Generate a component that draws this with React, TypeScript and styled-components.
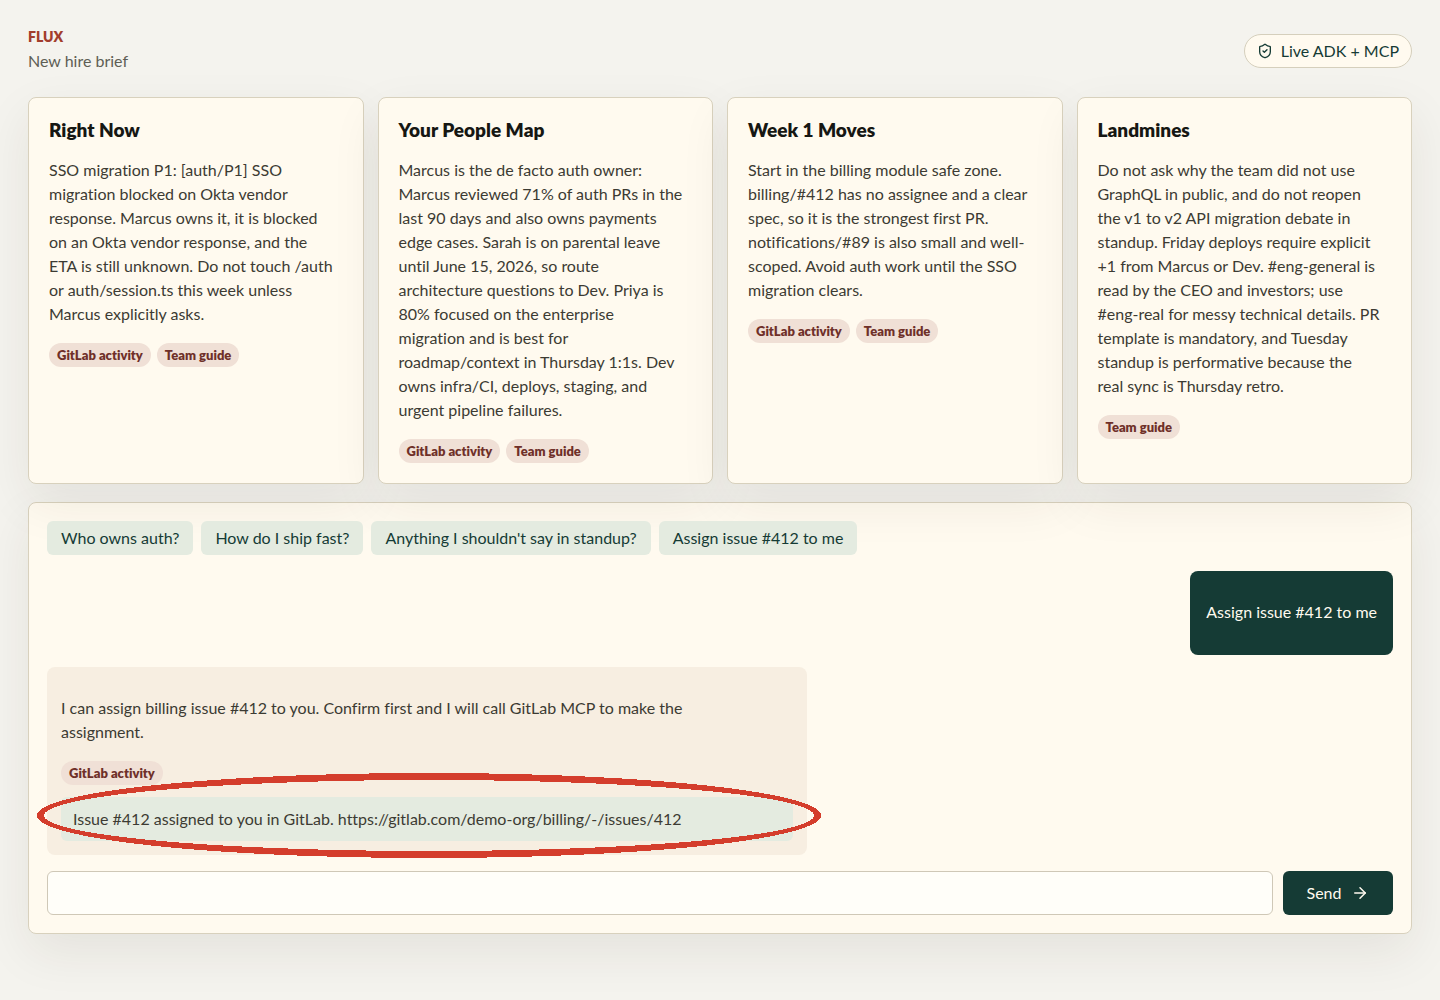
import React from "react";
import styled, { createGlobalStyle } from "styled-components";
import { ArrowRight, ShieldCheck } from "lucide-react";

const GlobalStyle = createGlobalStyle`
  * { box-sizing: border-box; }
  body {
    margin: 0;
    background: #f4f3ee;
    color: #161713;
    font-family: "Avenir Next", Avenir, Lato, sans-serif;
    font-size: 16px;
    line-height: 24px;
    font-variant-ligatures: none;
  }
  button, input { font: inherit; font-variant-ligatures: none; }
`;

const Page = styled.main`
  min-height: 100vh;
  padding: 28px;
`;

const Header = styled.header`
  display: flex;
  align-items: center;
  justify-content: space-between;
  margin-bottom: 24px;
`;

const Brand = styled.h1`
  margin: 0 0 3px;
  color: #a23d2c;
  font-size: 14px;
  line-height: 18px;
  font-weight: 800;
`;

const Tagline = styled.p`
  margin: 0;
  color: #5e5e55;
`;

const Status = styled.div`
  display: flex;
  align-items: center;
  gap: 8px;
  height: 34px;
  padding: 0 12px;
  border: 1px solid #d5cfbc;
  border-radius: 999px;
  background: #fffaef;
  color: #153b35;
`;

const surface = `
  border: 1px solid #d8d1bd;
  border-radius: 8px;
  background: #fffaef;
  box-shadow: 0 18px 50px rgba(54, 42, 24, 0.08);
`;

const Cards = styled.section`
  display: grid;
  grid-template-columns: repeat(4, minmax(0, 1fr));
  gap: 14px;
  margin-bottom: 18px;
`;

const Card = styled.article`
  ${surface}
  padding: 20px;
`;

const CardTitle = styled.h2`
  margin: 0 0 16px;
  font-size: 19px;
  line-height: 24px;
  font-weight: 800;
`;

const Copy = styled.p`
  margin: 0 0 17px;
  padding-right: 6px;
  color: #3c3b33;
`;

const Sources = styled.div`
  display: flex;
  flex-wrap: wrap;
  gap: 6px;
`;

const Source = styled.span`
  height: 24px;
  padding: 0 8px;
  border-radius: 999px;
  background: #f0e0d6;
  color: #6f3029;
  font-size: 13px;
  font-weight: 800;
`;

const Chat = styled.section`
  ${surface}
  display: grid;
  gap: 16px;
  padding: 18px;
`;

const Prompts = styled.div`
  display: flex;
  flex-wrap: wrap;
  gap: 8px;
`;

const Prompt = styled.button`
  height: 34px;
  padding: 0 14px;
  border: 0;
  border-radius: 6px;
  background: #e4ebe0;
  color: #153b35;
`;

const Messages = styled.div`
  display: flex;
  flex-direction: column;
  gap: 12px;
`;

const Bubble = styled.div<{ $own?: boolean }>`
  position: relative;
  align-self: ${(p) => (p.$own ? "flex-end" : "flex-start")};
  width: ${(p) => (p.$own ? "auto" : "100%")};
  max-width: 760px;
  padding: ${(p) => (p.$own ? "14px 16px" : "14px")};
  border-radius: 8px;
  background: ${(p) => (p.$own ? "#153b35" : "#f7eee1")};
`;

const BubbleText = styled.p<{ $own?: boolean }>`
  max-width: 700px;
  margin: 15px 0 17px;
  color: ${(p) => (p.$own ? "#fffaef" : "#3c3b33")};
`;

const Result = styled.div`
  margin-top: 12px;
  padding: 10px 12px;
  border-radius: 6px;
  background: #e4ebe0;
  color: #3c3b33;
`;

const Highlight = styled.svg`
  position: absolute;
  left: -10px;
  bottom: -3px;
  width: 784px;
  height: 85px;
  pointer-events: none;
`;

const Composer = styled.form`
  display: grid;
  grid-template-columns: minmax(0, 1fr) 110px;
  gap: 10px;
`;

const MessageInput = styled.input`
  height: 44px;
  padding: 0 14px;
  border: 1px solid #cfc8b7;
  border-radius: 6px;
  background: #fffef9;
`;

const Send = styled.button`
  display: flex;
  align-items: center;
  justify-content: center;
  gap: 10px;
  height: 44px;
  border: 0;
  border-radius: 6px;
  background: #153b35;
  color: #fffaef;
`;

const cards = [
  {
    title: "Right Now",
    text: "SSO migration P1: [auth/P1] SSO migration blocked on Okta vendor response. Marcus owns it, it is blocked on an Okta vendor response, and the ETA is still unknown. Do not touch /auth or auth/session.ts this week unless Marcus explicitly asks.",
    sources: ["GitLab activity", "Team guide"],
  },
  {
    title: "Your People Map",
    text: "Marcus is the de facto auth owner: Marcus reviewed 71% of auth PRs in the last 90 days and also owns payments edge cases. Sarah is on parental leave until June 15, 2026, so route architecture questions to Dev. Priya is 80% focused on the enterprise migration\u00a0and is best for roadmap/context in Thursday 1:1s. Dev owns infra/CI, deploys, staging, and urgent pipeline failures.",
    sources: ["GitLab activity", "Team guide"],
  },
  {
    title: "Week 1 Moves",
    text: "Start in the billing module safe zone. billing/#412 has no assignee and a clear spec, so it is the strongest first PR. notifications/#89 is also small and well-scoped. Avoid auth work until the SSO migration clears.",
    sources: ["GitLab activity", "Team guide"],
  },
  {
    title: "Landmines",
    text: "Do not ask why the team did not use GraphQL in public, and do not reopen the v1 to v2 API migration debate in standup. Friday deploys require explicit +1 from Marcus or Dev. #eng-general is read by the CEO and investors; use #eng-real for messy technical details. PR template is mandatory, and Tuesday standup is performative because the real\u00a0sync is Thursday retro.",
    sources: ["Team guide"],
  },
];

const prompts = [
  "Who owns auth?",
  "How do I ship fast?",
  "Anything I shouldn't say in standup?",
  "Assign issue #412 to me",
];

export default function App() {
  return (
    <>
      <GlobalStyle />
      <Page>
        <Header>
          <div>
            <Brand>FLUX</Brand>
            <Tagline>New hire brief</Tagline>
          </div>
          <Status>
            <ShieldCheck size={16} aria-hidden="true" />
            Live ADK + MCP
          </Status>
        </Header>
        <Cards>
          {cards.map((card) => (
            <Card key={card.title}>
              <CardTitle>{card.title}</CardTitle>
              <Copy>{card.text}</Copy>
              <Sources>
                {card.sources.map((s) => (
                  <Source key={s}>{s}</Source>
                ))}
              </Sources>
            </Card>
          ))}
        </Cards>
        <Chat>
          <Prompts>
            {prompts.map((p) => (
              <Prompt key={p} type="button">{p}</Prompt>
            ))}
          </Prompts>
          <Messages>
            <Bubble $own>
              <BubbleText $own>Assign issue #412 to me</BubbleText>
            </Bubble>
            <Bubble>
              <BubbleText>
                I can assign billing issue #412 to you. Confirm first and I will call GitLab MCP to make the assignment.
              </BubbleText>
              <Sources>
                <Source>GitLab activity</Source>
              </Sources>
              <Result>
                Issue #412 assigned to you in GitLab. https://gitlab.com/demo-org/billing/-/issues/412
              </Result>
              <Highlight viewBox="0 0 784 85" aria-hidden="true">
                <path
                  fill="#d43d2c"
                  fillRule="evenodd"
                  shapeRendering="crispEdges"
                  d="M0 42.5a392 42.5 0 1 0 784 0a392 42.5 0 1 0 -784 0zM7 42.5a385 35.5 0 1 0 770 0a385 35.5 0 1 0 -770 0z"
                />
              </Highlight>
            </Bubble>
          </Messages>
          <Composer onSubmit={(e) => e.preventDefault()}>
            <MessageInput aria-label="Message" />
            <Send type="submit">
              Send
              <ArrowRight size={18} strokeWidth={2} aria-hidden="true" />
            </Send>
          </Composer>
        </Chat>
      </Page>
    </>
  );
}
